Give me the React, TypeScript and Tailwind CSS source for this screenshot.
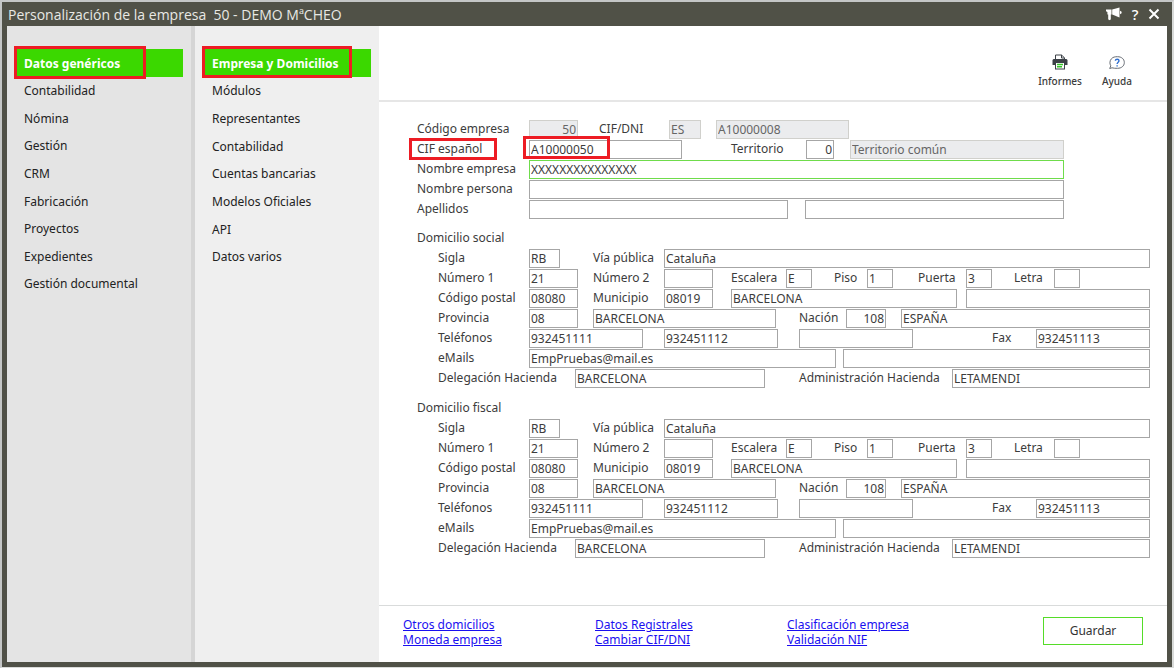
import { useId } from "react";

const MAIN_MENU = [
  "Datos genéricos",
  "Contabilidad",
  "Nómina",
  "Gestión",
  "CRM",
  "Fabricación",
  "Proyectos",
  "Expedientes",
  "Gestión documental",
];

const SUB_MENU = [
  "Empresa y Domicilios",
  "Módulos",
  "Representantes",
  "Contabilidad",
  "Cuentas bancarias",
  "Modelos Oficiales",
  "API",
  "Datos varios",
];

const LINKS = [
  ["Otros domicilios", "Moneda empresa"],
  ["Datos Registrales", "Cambiar CIF/DNI"],
  ["Clasificación empresa", "Validación NIF"],
];

function Highlight({ className }: { className: string }) {
  return (
    <span
      aria-hidden="true"
      className={`pointer-events-none absolute z-10 border-3 border-[#ed1c24] ${className}`}
    />
  );
}

function Menu({
  items,
  name,
  className,
  listClass,
  highlightClass,
}: {
  items: string[];
  name: string;
  className: string;
  listClass: string;
  highlightClass: string;
}) {
  return (
    <nav aria-label={name} className={`shrink-0 pt-[23px] pr-2 pl-[10px] ${className}`}>
      <ul className={`grid auto-rows-fr ${listClass}`}>
        {items.map((item, i) => (
          <li key={item} className="relative flex">
            <a
              href="#"
              aria-current={i === 0 ? "page" : undefined}
              className={
                i === 0
                  ? "flex flex-1 items-center bg-[#3bd800] pt-0.5 pl-[7px] font-bold text-white"
                  : "flex flex-1 items-center pt-0.5 pl-[7px] text-[#222]"
              }
            >
              {item}
            </a>
            {i === 0 && <Highlight className={highlightClass} />}
          </li>
        ))}
      </ul>
    </nav>
  );
}

type FieldProps = {
  label: string;
  labelClass?: string;
  className: string;
  value?: string;
  disabled?: boolean;
  active?: boolean;
  right?: boolean;
};

/* A text box; its label is drawn before it only when labelClass is given. */
function Field({ label, labelClass, className, value = "", disabled, active, right }: FieldProps) {
  const id = useId();
  const tone = disabled
    ? "border-[#d0d0cc] bg-[#ebecee] text-[#666]"
    : active
      ? "border-[#6fdc4b] bg-white text-[#3c3c3c]"
      : "border-[#a6a6a6] bg-white text-[#3c3c3c]";
  return (
    <>
      {labelClass !== undefined && (
        <label htmlFor={id} className={`shrink-0 whitespace-nowrap ${labelClass}`}>
          {label}
        </label>
      )}
      <input
        id={id}
        type="text"
        aria-label={labelClass === undefined ? label : undefined}
        defaultValue={value}
        disabled={disabled}
        className={`h-[19px] min-w-0 border px-px leading-4 outline-none ${tone} ${
          right ? "text-right" : ""
        } ${className}`}
      />
    </>
  );
}

function Row({ children }: { children: React.ReactNode }) {
  return <div className="flex h-5 items-center">{children}</div>;
}

function Address({ title }: { title: string }) {
  return (
    <fieldset>
      <legend className="h-[20px] leading-5">{title}</legend>
      <div className="pl-[21px]">
        <Row>
          <Field label="Sigla" labelClass="w-[91px]" className="w-[31px]" value="RB" />
          <Field label="Vía pública" labelClass="ml-[33px] w-[71px]" className="flex-1" value="Cataluña" />
        </Row>
        <Row>
          <Field label="Número 1" labelClass="w-[91px]" className="w-[49px]" value="21" />
          <Field label="Número 2" labelClass="ml-[15px] w-[71px]" className="w-[49px]" />
          <Field label="Escalera" labelClass="ml-[18px] w-[55px]" className="w-[26px]" value="E" />
          <Field label="Piso" labelClass="ml-[22px] w-[33px]" className="w-[26px]" value="1" />
          <Field label="Puerta" labelClass="ml-[25px] w-[48px]" className="w-[26px]" value="3" />
          <Field label="Letra" labelClass="ml-[22px] w-[40px]" className="w-[26px]" />
        </Row>
        <Row>
          <Field label="Código postal" labelClass="w-[91px]" className="w-[49px]" value="08080" />
          <Field label="Municipio" labelClass="ml-[15px] w-[71px]" className="w-[49px]" value="08019" />
          <Field label="Nombre del municipio" className="ml-[18px] w-[226px]" value="BARCELONA" />
          <Field label="Localidad" className="ml-[9px] flex-1" />
        </Row>
        <Row>
          <Field label="Provincia" labelClass="w-[91px]" className="w-[49px]" value="08" />
          <Field label="Nombre de la provincia" className="ml-[15px] w-[183px]" value="BARCELONA" />
          <Field label="Nación" labelClass="ml-[23px] w-[47px]" className="w-[40px]" value="108" right />
          <Field label="Nombre de la nación" className="ml-[15px] flex-1" value="ESPAÑA" />
        </Row>
        <Row>
          <Field label="Teléfonos" labelClass="w-[91px]" className="w-[114px]" value="932451111" />
          <Field label="Teléfono 2" className="ml-[21px] w-[114px]" value="932451112" />
          <Field label="Teléfono 3" className="ml-[21px] w-[114px]" />
          <Field label="Fax" labelClass="ml-auto w-[44px]" className="w-[114px]" value="932451113" />
        </Row>
        <Row>
          <Field label="eMails" labelClass="w-[91px]" className="flex-1" value="EmpPruebas@mail.es" />
          <Field label="eMail 2" className="ml-[7px] flex-1" />
        </Row>
        <Row>
          <Field label="Delegación Hacienda" labelClass="w-[137px]" className="w-[190px]" value="BARCELONA" />
          <Field
            label="Administración Hacienda"
            labelClass="ml-[34px] w-[153px]"
            className="flex-1"
            value="LETAMENDI"
          />
        </Row>
      </div>
    </fieldset>
  );
}

function MegaphoneIcon() {
  return (
    <svg width="16" height="14" viewBox="0 0 16 14" fill="currentColor" aria-hidden="true">
      <path d="M0 2.5H5.5V7.5H4.8V12.5L3 13.2L2.2 12V7.5H1.4V5L0 4.2Z" />
      <path d="M6.2 2.6L13.5 0.4V10.6L6.2 7.6Z" />
      <path d="M14 3.8L15.6 4.8V6.2L14 7.2Z" />
    </svg>
  );
}

function PrinterIcon() {
  return (
    <svg width="16" height="16" viewBox="0 0 16 16" aria-hidden="true">
      <path d="M3.5 6V1H9.5L12.5 3.8V6" fill="#fff" stroke="#3d4248" />
      <path d="M9.5 1V4H12.5" fill="none" stroke="#3d4248" />
      <path d="M1.5 5H14.5L15.5 6V11H0.5V6Z" fill="#3d4248" />
      <rect x="3.5" y="8.5" width="9" height="6.5" fill="#fff" stroke="#3d4248" />
      <path d="M5 10.5H11M5 12.8H10" stroke="#35c52a" strokeWidth="1.5" />
    </svg>
  );
}

function HelpBubbleIcon() {
  return (
    <svg width="16" height="14" viewBox="0 0 16 14" fill="none" aria-hidden="true">
      <path
        d="M3 11.8L0.7 12.5L1.8 9.8C0.4 7.8 0.7 4.5 2.5 2.7C4 1 6 0.7 8.5 0.7C12.5 0.7 15.3 3 15.3 6.5C15.3 10 12.5 12.3 8.5 12.3C6.5 12.3 4.5 12.3 3 11.8Z"
        stroke="#666b73"
      />
      <path d="M6.3 4.8C6.5 2.8 10 2.8 10 4.8C10 6.2 8.1 6.2 8.1 8M8.1 9.2V10.5" stroke="#2f6fd0" strokeWidth="1.4" />
    </svg>
  );
}

export default function App() {
  return (
    <div className="flex min-h-screen flex-col border-x-2 border-t-2 border-b border-[#c4c6c6] border-r-[#d9dbd9] border-b-[#d9dbd9] bg-[#505147] font-['Noto_Sans','Open_Sans',sans-serif] text-[12px] text-[#3c3c3c]">
      <header className="flex h-6 shrink-0 items-center justify-between pr-3 pl-[6px] text-[#e8e8e4]">
        <h1 className="font-['Open_Sans','Noto_Sans',sans-serif] text-[14px] whitespace-pre">Personalización de la empresa  50 - DEMO MªCHEO</h1>
        <div className="flex items-center gap-[7px] text-white">
          <button type="button" aria-label="Novedades">
            <MegaphoneIcon />
          </button>
          <button type="button" aria-label="Ayuda" className="w-3 text-[15px] leading-5 font-medium">
            ?
          </button>
          <button type="button" aria-label="Cerrar">
            <svg width="12" height="12" viewBox="0 0 12 12" stroke="currentColor" strokeWidth="2" aria-hidden="true">
              <path d="M1.5 1.5L10.5 10.5M10.5 1.5L1.5 10.5" />
            </svg>
          </button>
        </div>
      </header>

      <div className="mx-[5px] mb-[5px] flex flex-1 bg-white">
        <Menu
          items={MAIN_MENU}
          name="Secciones"
          className="w-[188px] border-r-4 border-[#d5d5d5] bg-[#e4e4e4]"
          listClass="h-[248px]"
          highlightClass="-top-[3px] -left-[3px] h-[33px] w-[132px]"
        />
        <Menu
          items={SUB_MENU}
          name="Apartados"
          className="w-[184px] bg-[#efefef]"
          listClass="h-[221px]"
          highlightClass="-top-[3px] -left-[3px] h-[32px] w-[150px]"
        />

        <main className="flex min-w-0 flex-1 flex-col">
          <div className="flex h-[76px] items-end justify-end gap-5 border-b-2 border-[#e6e6e6] pr-[35px] pb-[11px] text-[10px] font-medium">
            <button type="button" className="flex flex-col items-center gap-1">
              <PrinterIcon />
              Informes
            </button>
            <button type="button" className="flex flex-col items-center gap-1">
              <HelpBubbleIcon />
              Ayuda
            </button>
          </div>

          <form className="flex-1 pt-[17px] pr-[17px] pl-[38px]">
            <div className="pr-[86px]">
              <Row>
                <Field label="Código empresa" labelClass="w-[112px]" className="w-[49px]" value="50" disabled right />
                <Field label="CIF/DNI" labelClass="ml-[21px] w-[70px]" className="w-[32px]" value="ES" disabled />
                <Field label="Número de CIF/DNI" className="ml-[15px] w-[133px]" value="A10000008" disabled />
              </Row>
              <div className="relative">
                <Row>
                  <Field label="CIF español" labelClass="w-[112px]" className="w-[153px]" value="A10000050" />
                  <Field label="Territorio" labelClass="ml-[49px] w-[75px]" className="w-[28px]" value="0" right />
                  <Field label="Nombre del territorio" className="ml-[16px] flex-1" value="Territorio común" disabled />
                </Row>
                <Highlight className="-top-px -left-2 h-[22px] w-[88px]" />
                <Highlight className="-top-[3px] left-[106px] h-[23px] w-[87px]" />
              </div>
              <Row>
                <Field label="Nombre empresa" labelClass="w-[112px]" className="flex-1" value="XXXXXXXXXXXXXXX" active />
              </Row>
              <Row>
                <Field label="Nombre persona" labelClass="w-[112px]" className="flex-1" />
              </Row>
              <Row>
                <Field label="Apellidos" labelClass="w-[112px]" className="flex-1" />
                <Field label="Segundo apellido" className="ml-[17px] flex-1" />
              </Row>
            </div>
            <div className="mt-[9px] flex flex-col gap-[10px]">
              <Address title="Domicilio social" />
              <Address title="Domicilio fiscal" />
            </div>
          </form>

          <footer className="flex h-[57px] shrink-0 items-start justify-between border-t border-[#d9dbdb] pt-[11px] pr-[24px] pl-[24px]">
            <div className="flex">
              {LINKS.map((pair) => (
                <div key={pair[0]} className="flex w-48 flex-col items-start leading-[15px] text-[#1a0ff0]">
                  {pair.map((text) => (
                    <a key={text} href="#" className="underline underline-offset-1">
                      {text}
                    </a>
                  ))}
                </div>
              ))}
            </div>
            <button type="submit" className="h-[28px] w-[100px] border border-[#55dc28] bg-white text-[#333]">
              Guardar
            </button>
          </footer>
        </main>
      </div>
    </div>
  );
}
